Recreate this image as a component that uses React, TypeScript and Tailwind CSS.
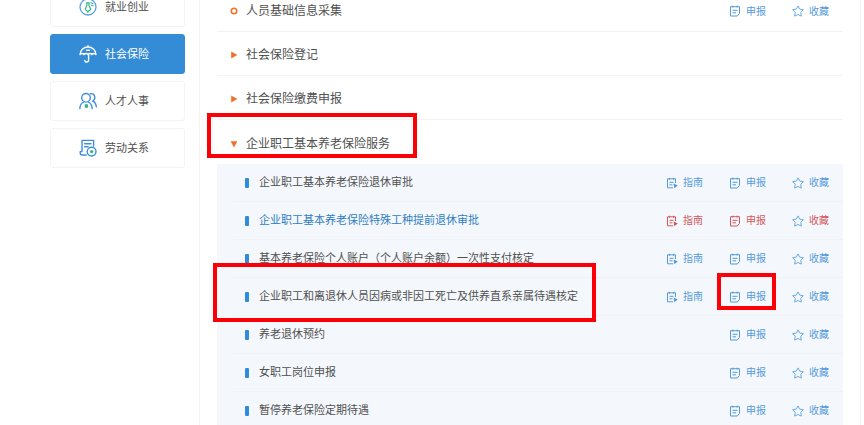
import React, { useState } from 'react';
import clsx from 'clsx';

type IconProps = { className?: string };

const StartupIcon = ({ className }: IconProps) => (
  <svg viewBox="0 0 18 18" fill="none" className={className}>
    <circle cx="9" cy="9" r="8" stroke="#5b9fe0" strokeWidth="1.3" />
    <path d="M7.6 4.8h2.6L9.800 7l2 4.200L8.800 14l-2.600-2.800L8 7z" stroke="#35b58a" strokeWidth="1.2" strokeLinejoin="round" />
    <path d="M11.800 4.800l2 .8M12.400 7.200l1.600.4" stroke="#35b58a" strokeWidth="1.1" strokeLinecap="round" />
  </svg>
);

const UmbrellaIcon = ({ className }: IconProps) => (
  <svg viewBox="0 0 18 18" fill="none" stroke="#fff" strokeWidth="1.4" strokeLinecap="round" strokeLinejoin="round" className={className}>
    <path d="M9 .8v1.2M1 9.6C1 5.2 4.6 2 9 2s8 3.2 8 7.6c-.9-1.5-3.1-1.5-4 0-.9-1.5-3.1-1.5-4 0-.9-1.5-3.1-1.5-4 0-.9-1.5-3.1-1.5-4 0z" />
    <path d="M9.600 9.400v5.800c0 2.400-3.800 2.400-3.800.2M7.600 5.200h2.800" />
  </svg>
);

const PeopleIcon = ({ className }: IconProps) => (
  <svg viewBox="0 0 18 18" fill="none" stroke="#3f8fdc" strokeWidth="1.4" strokeLinecap="round" className={className}>
    <circle cx="7" cy="5.8" r="4.3" />
    <path d="M.8 16.6c.2-3.400 1.700-5.500 3.800-6.600M9.400 10c2.100 1.100 3.600 3.200 3.800 6.600" />
    <path d="M11.400 1.700c4.800-.6 5.800 5.400 2.400 7.300 2.100 1 3.300 3.200 3.500 5.800" />
    <circle cx="7.400" cy="14" r="1.900" fill="#2fb68a" stroke="none" />
  </svg>
);

const LaborIcon = ({ className }: IconProps) => (
  <svg viewBox="0 0 18 18" fill="none" stroke="#3f8fdc" strokeWidth="1.4" strokeLinecap="round" strokeLinejoin="round" className={className}>
    <path d="M14.600 7V1.400H3V12.600M3 12.600H1.200v1.200c0 1.400.8 2.200 2 2.200h4" />
    <path d="M5.600 4.800h6.400M5.600 7.800h3.400" />
    <circle cx="12.600" cy="12.600" r="4.400" />
    <circle cx="12.600" cy="12.600" r="1.700" fill="#2fb68a" stroke="none" />
  </svg>
);

const GuideIcon = ({ className }: IconProps) => (
  <svg viewBox="0 0 12 12" fill="none" stroke="currentColor" strokeLinejoin="round" className={className}>
    <path d="M9.500 6V1.800h-8v9h5.500M3.500.8v2M7.500.8v2M3.500 5.300h4M3.500 7.800h3" />
    <path d="M7.600 6.400l4.200 2.100L8.200 11.200z" fill="currentColor" stroke="none" />
  </svg>
);

const ApplyIcon = ({ className }: IconProps) => (
  <svg viewBox="0 0 12 12" fill="none" stroke="currentColor" strokeLinejoin="round" className={className}>
    <path d="M1.500 1.700h9v6.800L8.300 11H1.500zM3.800.6v2M8.200.6v2M3.500 5.300h5M3.500 7.800h3.500" />
  </svg>
);

const StarIcon = ({ className }: IconProps) => (
  <svg viewBox="0 0 12 12" fill="none" stroke="currentColor" strokeLinejoin="round" className={className}>
    <path d="M6 .9l1.700 3.200 3.700.6-2.600 2.700.5 3.700L6 9.500l-3.300 1.600.5-3.700L.6 4.700l3.700-.6z" />
  </svg>
);

const CATEGORIES = [
  { name: '就业创业', Icon: StartupIcon },
  { name: '社会保险', Icon: UmbrellaIcon },
  { name: '人才人事', Icon: PeopleIcon },
  { name: '劳动关系', Icon: LaborIcon },
];

interface Service {
  name: string;
  guide?: boolean;
  active?: boolean;
  marked?: boolean;
}

const SERVICES: Service[] = [
  { name: '企业职工基本养老保险退休审批', guide: true },
  { name: '企业职工基本养老保险特殊工种提前退休审批', guide: true, active: true },
  { name: '基本养老保险个人账户（个人账户余额）一次性支付核定', guide: true },
  { name: '企业职工和离退休人员因病或非因工死亡及供养直系亲属待遇核定', guide: true, marked: true },
  { name: '养老退休预约' },
  { name: '女职工岗位申报' },
  { name: '暂停养老保险定期待遇' },
];

const Mark = ({ className }: { className: string }) => (
  <span className={clsx('absolute z-10 border-4 border-[#fb0007] pointer-events-none', className)} />
);

const Actions = ({ guide, active, marked }: Omit<Service, 'name'>) => {
  const item = 'relative flex items-center gap-[5px] cursor-pointer';
  const color = active ? 'text-[#d4565a]' : 'text-[#559ada]';
  return (
    <div className={clsx('flex shrink-0 gap-[26px] pr-3.5 text-[10px]', color)}>
      {guide && (
        <button type="button" className={item}>
          <GuideIcon className="size-3" />
          指南
        </button>
      )}
      <button type="button" className={item}>
        <ApplyIcon className="size-3" />
        申报
        {marked && <Mark className="-left-3 -right-2.5 -top-4 -bottom-1.5" />}
      </button>
      <button type="button" className={item}>
        <StarIcon className="size-3 text-[#6aabe0]" />
        收藏
      </button>
    </div>
  );
};

const Arrow = ({ open }: { open?: boolean }) => (
  <svg viewBox="0 0 8 8" className="size-2" fill="#f0712c">
    {open ? <path d="M.6 1.2h6.800L4 7.400z" /> : <path d="M1.200.6v6.800L7.400 4z" />}
  </svg>
);

const groupRow = 'flex h-11 items-center border-b border-[#f3f3f3] pt-[3px]';
const groupButton = 'flex items-center gap-2 pl-[13px] text-xs cursor-pointer';

export default function App() {
  const [category, setCategory] = useState('社会保险');
  const [open, setOpen] = useState(true);

  return (
    <div className="h-screen overflow-hidden bg-white font-['Liberation_Sans','Noto_Sans_CJK_SC',sans-serif] text-[#505050]">
      <div className="-mt-[13px] flex min-h-full pl-[50px] pr-[3px]">
        <nav className="mr-3.5 flex w-[135px] shrink-0 flex-col gap-[7px]">
          {CATEGORIES.map(({ name, Icon }) => (
            <button
              key={name}
              type="button"
              onClick={() => setCategory(name)}
              className={clsx(
                'flex h-10 items-center gap-2 rounded-[3px] border pl-7 text-[11px] cursor-pointer',
                category === name
                  ? 'border-[#348cd7] bg-[#348cd7] text-white'
                  : 'border-[#f4f4f4] bg-white'
              )}
            >
              <Icon className="size-[18px]" />
              {name}
            </button>
          ))}
        </nav>

        <main className="min-w-0 flex-1 border-x border-[#f4f4f4] px-[17px] pt-px">
          <div className={clsx(groupRow, 'justify-between')}>
            <a href="#collect" className={groupButton}>
              <svg viewBox="0 0 8 8" className="size-2" fill="none" stroke="#f0712c" strokeWidth="1.6">
                <circle cx="4" cy="4" r="2.7" />
              </svg>
              人员基础信息采集
            </a>
            <Actions />
          </div>
          <div className={groupRow}>
            <button type="button" className={groupButton}>
              <Arrow />
              社会保险登记
            </button>
          </div>
          <div className={groupRow}>
            <button type="button" className={groupButton}>
              <Arrow />
              社会保险缴费申报
            </button>
          </div>
          <div className="relative flex h-11 items-center pt-[3px]">
            <button type="button" aria-expanded={open} onClick={() => setOpen(!open)} className={groupButton}>
              <Arrow open={open} />
              企业职工基本养老保险服务
            </button>
            <Mark className="-left-2.5 -top-[7px] h-[45px] w-[210px]" />
          </div>

          {open && (
            <ul className="bg-[#f4f8fc] pl-4">
              {SERVICES.map((service) => (
                <li
                  key={service.name}
                  className="relative flex h-[38px] items-center justify-between border-b border-[#eff3f7] pl-3"
                >
                  <a
                    href="#service"
                    className={clsx('flex items-center gap-2.5 text-[11px]', service.active && 'text-[#2e7dc2]')}
                  >
                    <span className="h-2.5 w-1 rounded-[1px] bg-[#2f8bdc]" />
                    {service.name}
                  </a>
                  <Actions guide={service.guide} active={service.active} marked={service.marked} />
                  {service.marked && <Mark className="-left-5 -top-[15px] h-[59px] w-[383px]" />}
                </li>
              ))}
            </ul>
          )}
        </main>
      </div>
    </div>
  );
}
